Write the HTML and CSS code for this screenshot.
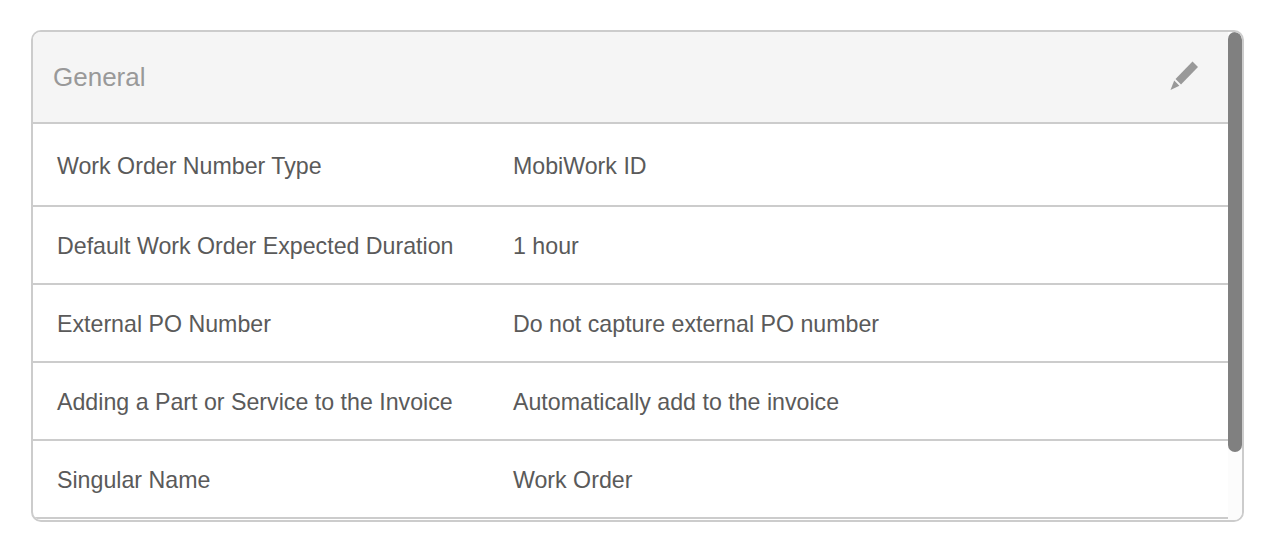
FILE: index.html
```html
<!DOCTYPE html>
<html lang="en">
<head>
    <meta charset="UTF-8">
    <title>General Settings</title>
    <link rel="stylesheet" href="styles.css">
</head>
<body>

<div class="card">
    <div class="card-inner">
        <div class="card-header">
            <h2>General</h2>
            <svg class="edit-icon" width="30" height="32" viewBox="0 0 30 32">
                <path d="M23.5 2.5 L29 8 L12 25.5 L6.5 20 Z" fill="#999"/>
                <path d="M5.2 21.6 L10.4 26.8 L1.5 31 Z" fill="#999"/>
            </svg>
        </div>

        <div class="row">
            <div class="row-label">Work Order Number Type</div>
            <div class="row-value">MobiWork ID</div>
        </div>
        <div class="row">
            <div class="row-label">Default Work Order Expected Duration</div>
            <div class="row-value">1 hour</div>
        </div>
        <div class="row">
            <div class="row-label">External PO Number</div>
            <div class="row-value">Do not capture external PO number</div>
        </div>
        <div class="row">
            <div class="row-label">Adding a Part or Service to the Invoice</div>
            <div class="row-value">Automatically add to the invoice</div>
        </div>
        <div class="row">
            <div class="row-label">Singular Name</div>
            <div class="row-value">Work Order</div>
        </div>
    </div>

    <div class="scroll-track">
        <div class="scroll-thumb"></div>
    </div>
</div>

</body>
</html>
```

FILE: styles.css
```css
body {
    margin: 0;
    padding: 30px 30px 0 31px;
    font-family: "Liberation Sans", Arial, sans-serif;
    background-color: #fff;
}
.card {
    display: flex;
    width: 1213px;
    height: 492px;
    box-sizing: border-box;
    border: 2px solid #ccc;
    border-radius: 10px;
    overflow: hidden;
}
.card-inner {
    flex: 1;
    min-width: 0;
}
.card-header {
    display: flex;
    align-items: center;
    justify-content: space-between;
    height: 92px;
    box-sizing: border-box;
    padding: 0 29px 0 20px;
    border-bottom: 2px solid #ccc;
    background-color: #f5f5f5;
}
h2 {
    margin: 0;
    font-size: 26px;
    font-weight: normal;
    color: #999;
}
.edit-icon {
    display: block;
    margin-bottom: 4px;
}
.row {
    display: flex;
    align-items: center;
    height: 78px;
    box-sizing: border-box;
    padding: 2px 0 0 24px;
    border-bottom: 2px solid #ccc;
    font-size: 23.2px;
    color: #5a5a5a;
}
.card-header + .row {
    height: 83px;
    padding-top: 3px;
}
.row-label {
    width: 456px;
}
.scroll-track {
    width: 14px;
    background-color: #fcfcfc;
}
.scroll-thumb {
    height: 420px;
    border-radius: 7px;
    background-color: #808080;
}
```
